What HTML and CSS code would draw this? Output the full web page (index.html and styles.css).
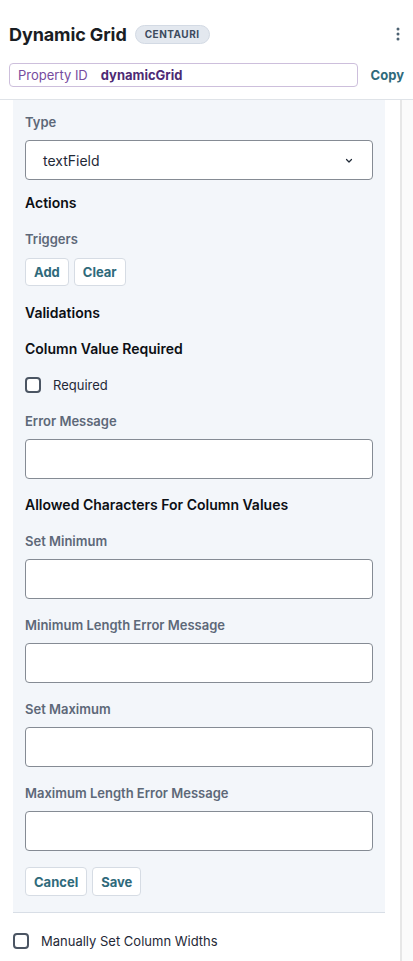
FILE: index.html
```html
<!DOCTYPE html>
<html>
<head>
<meta charset="utf-8">
<link rel="stylesheet" href="styles.css">
</head>
<body>
<div class="page">
  <div class="main">
    <header class="header">
      <div class="title-row">
        <h1 class="title">Dynamic Grid</h1>
        <span class="badge">CENTAURI</span>
        <button class="kebab" aria-label="More">
          <svg width="4" height="14" viewBox="0 0 4 14"><circle cx="2" cy="2" r="1.5"/><circle cx="2" cy="7" r="1.5"/><circle cx="2" cy="12" r="1.5"/></svg>
        </button>
      </div>
      <div class="prop-row">
        <div class="prop-box"><span class="prop-label">Property ID</span><span class="prop-value">dynamicGrid</span></div>
        <button class="copy">Copy</button>
      </div>
    </header>
    <div class="body">
      <section class="panel">
        <div class="field field-type">
          <div class="label">Type</div>
          <div class="select"><span>textField</span>
            <svg class="chev" width="8" height="6" viewBox="0 0 8 6"><path d="M1.5 1.5 L4 4 L6.5 1.5" fill="none" stroke="#1f2937" stroke-width="1.2" stroke-linecap="round" stroke-linejoin="round"/></svg>
          </div>
        </div>
        <div class="heading">Actions</div>
        <div class="field field-triggers">
          <div class="label label-tight">Triggers</div>
          <div class="btns">
            <button class="btn">Add</button>
            <button class="btn">Clear</button>
          </div>
        </div>
        <div class="heading">Validations</div>
        <div class="heading">Column Value Required</div>
        <label class="check-row"><span class="box"></span><span>Required</span></label>
        <div class="field">
          <div class="label">Error Message</div>
          <div class="input"></div>
        </div>
        <div class="heading">Allowed Characters For Column Values</div>
        <div class="field">
          <div class="label">Set Minimum</div>
          <div class="input"></div>
        </div>
        <div class="field">
          <div class="label">Minimum Length Error Message</div>
          <div class="input"></div>
        </div>
        <div class="field">
          <div class="label">Set Maximum</div>
          <div class="input"></div>
        </div>
        <div class="field field-last">
          <div class="label">Maximum Length Error Message</div>
          <div class="input"></div>
        </div>
        <div class="btns">
          <button class="btn btn-tall">Cancel</button>
          <button class="btn btn-tall">Save</button>
        </div>
      </section>
      <label class="check-row outer-check"><span class="box"></span><span>Manually Set Column Widths</span></label>
    </div>
  </div>
  <div class="track"></div>
</div>
</body>
</html>
```

FILE: styles.css
```css
* { box-sizing: border-box; }
html, body { margin: 0; padding: 0; background: #fff; }
body {
  font-family: Inter, "Noto Sans", sans-serif;
  color: #111827;
  -webkit-font-smoothing: antialiased;
}
.page { display: flex; min-height: 961px; }
.main { width: 400px; flex: none; }
.track { flex: 1; border-left: 2px solid #e7e7e7; background: #fbfbfb; margin-top: 100px; }

.header { padding: 20px 0 12px 9px; border-bottom: 1px solid #dfe3e8; width: 413px; }
.title-row { display: flex; align-items: center; height: 28px; padding-right: 13px; }
.title { margin: 0; font-size: 18px; font-weight: 700; color: #1a1d23; letter-spacing: -0.1px; }
.badge {
  margin-left: 8px; height: 19px; padding: 0 9px; border-radius: 10px;
  background: #e3e8ef; border: 1px solid #d3dae4;
  font-size: 10px; font-weight: 700; letter-spacing: 0.5px; color: #3d4b5e;
  display: inline-flex; align-items: center;
}
.kebab { margin-left: auto; background: none; border: 0; padding: 0; display: flex; fill: #4d6272; }
.prop-row { display: flex; align-items: center; margin-top: 15px; padding-right: 9px; }
.prop-box {
  width: 349px; height: 24px; border: 1px solid #cdbfdc; border-radius: 4px;
  display: flex; align-items: center; padding-left: 8px; font-size: 13px;
}
.prop-label { color: #764b9e; }
.prop-value { margin-left: 13px; font-weight: 700; color: #4d2a74; }
.copy {
  margin-left: auto; background: none; border: 0; padding: 0;
  font-family: inherit; font-size: 13px; font-weight: 700; color: #2f6a7b;
}

.body { padding: 0 15px 0 13px; }
.panel {
  background: #f3f6fa; border-bottom: 1px solid #d8dee6;
  padding: 13px 12px 16px 12px;
  display: flex; flex-direction: column;
}
.label { font-size: 13px; font-weight: 600; color: #5d6878; line-height: 18px; margin-bottom: 9px; }
.label-tight { margin-bottom: 10px; }
.field { margin-bottom: 17px; }
.field-type { margin-bottom: 14px; }
.field-triggers { margin-bottom: 18px; }
.field-last { margin-bottom: 16px; }
.heading { font-size: 14px; font-weight: 600; color: #0c0f14; line-height: 18px; margin-bottom: 18px; }
.select, .input {
  height: 40px; background: #fff; border: 1px solid #858b94; border-radius: 4px;
}
.select {
  display: flex; align-items: center; justify-content: space-between;
  padding: 0 19px 0 17px; font-size: 14px; color: #1f2937;
}
.chev { margin-top: 1px; }
.btns { display: flex; gap: 5px; }
.btn {
  height: 28px; padding: 0 8px; background: #fff; border: 1px solid #d6dce4; border-radius: 4px;
  font-family: inherit; font-size: 13px; font-weight: 700; color: #2f6a7b;
}
.btn-tall { height: 29px; }
.check-row {
  display: flex; align-items: center; gap: 12px; height: 18px; margin-bottom: 18px;
  font-size: 13px; color: #1f2937;
}
.box { width: 16px; height: 16px; border: 2px solid #4b5563; border-radius: 4px; background: #fff; flex: none; }
.outer-check { margin: 19px 0 0 0; height: 18px; }
```
